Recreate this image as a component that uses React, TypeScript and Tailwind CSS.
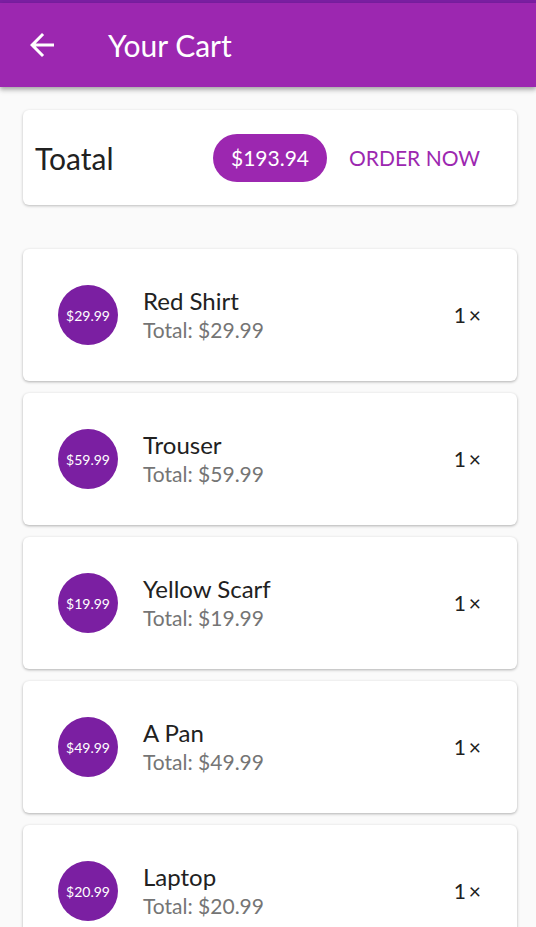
import React from "react";

const items = [
  { title: "Red Shirt", price: "29.99" },
  { title: "Trouser", price: "59.99" },
  { title: "Yellow Scarf", price: "19.99" },
  { title: "A Pan", price: "49.99" },
  { title: "Laptop", price: "20.99" },
];

export default function App() {
  return (
    <div
      className="w-[536px] h-[927px] overflow-hidden bg-[#fafafa] flex flex-col"
      style={{ fontFamily: "Lato, 'Noto Sans', sans-serif" }}
    >
      <div className="h-[3px] bg-[#7b1fa2] shrink-0" />
      <div className="h-[84px] shrink-0 bg-[#9c27b0] flex items-center shadow-[0_2px_4px_rgba(0,0,0,0.25),0_4px_5px_rgba(0,0,0,0.12)] relative z-10">
        <div className="w-[84px] flex items-center justify-center">
          <svg width="36" height="36" viewBox="0 0 24 24" fill="white">
            <path d="M20 11H7.83l5.59-5.59L12 4l-8 8 8 8 1.41-1.41L7.83 13H20v-2z" />
          </svg>
        </div>
        <div className="ml-[24px] text-white text-[30px] leading-none">Your Cart</div>
      </div>

      <div className="ml-[23px] w-[494px] mt-[23px] h-[95px] shrink-0 bg-white rounded-[6px] shadow-[0_1px_3px_rgba(0,0,0,0.25)] flex items-center px-[12px]">
        <span className="text-[30px] text-[#212121] leading-none">Toatal</span>
        <div className="flex-1" />
        <div className="h-[48px] w-[114px] rounded-full bg-[#9c27b0] flex items-center justify-center text-white text-[21px]">
          $193.94
        </div>
        <div className="ml-[22px] mr-[25px] text-[#9c27b0] text-[21px]">ORDER NOW</div>
      </div>

      <div className="h-[44px] shrink-0" />

      <div className="flex flex-col gap-[12px]">
        {items.map((it) => (
          <div
            key={it.title}
            className="ml-[23px] w-[494px] h-[132px] shrink-0 bg-white rounded-[6px] shadow-[0_1px_3px_rgba(0,0,0,0.3)] flex items-center pl-[35px] pr-[36px]"
          >
            <div className="w-[60px] h-[60px] rounded-full bg-[#7b1fa2] flex items-center justify-center text-white text-[14px] shrink-0">
              ${it.price}
            </div>
            <div className="ml-[25px] flex-1 flex flex-col">
              <span className="text-[24px] leading-[30px] text-[#212121]">{it.title}</span>
              <span className="text-[21px] leading-[28px] text-[#757575]">Total: ${it.price}</span>
            </div>
            <span className="text-[21px] text-[#212121]">
              1<span className="ml-[3px]">×</span>
            </span>
          </div>
        ))}
      </div>
    </div>
  );
}
